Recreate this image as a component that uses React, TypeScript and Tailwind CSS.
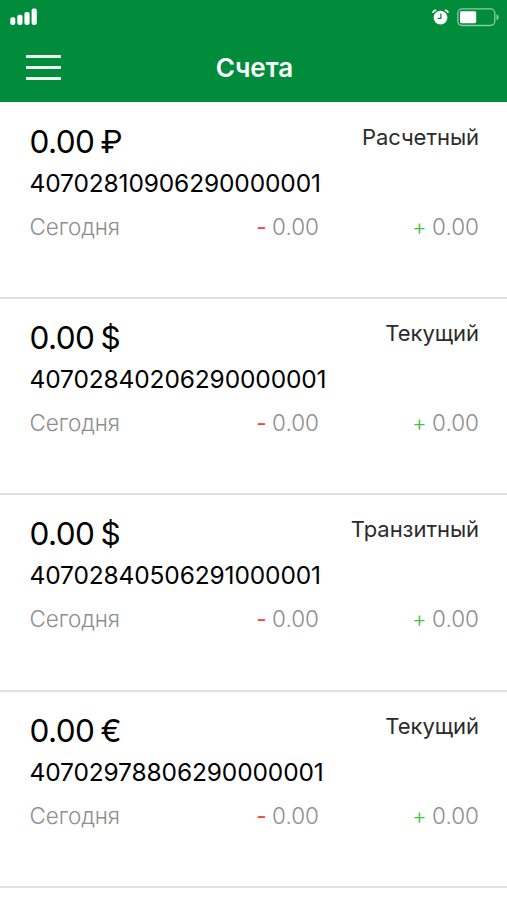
import React from 'react';

interface Account {
  balance: string;
  number: string;
  kind: string;
  debit: string;
  credit: string;
}

const accounts: Account[] = [
  { balance: '0.00 ₽', number: '40702810906290000001', kind: 'Расчетный', debit: '0.00', credit: '0.00' },
  { balance: '0.00 $', number: '40702840206290000001', kind: 'Текущий', debit: '0.00', credit: '0.00' },
  { balance: '0.00 $', number: '40702840506291000001', kind: 'Транзитный', debit: '0.00', credit: '0.00' },
  { balance: '0.00 €', number: '40702978806290000001', kind: 'Текущий', debit: '0.00', credit: '0.00' },
];

const SignalIcon = () => (
  <svg width="28" height="18" viewBox="0 0 28 18" fill="#fff">
    <rect x="0.3" y="9.3" width="5" height="7.6" rx="1.8" />
    <rect x="7.3" y="6.8" width="5.2" height="10.1" rx="1.8" />
    <rect x="14.4" y="3.9" width="5.2" height="13" rx="1.8" />
    <rect x="21.6" y="0.6" width="5.2" height="16.3" rx="1.8" />
  </svg>
);

const AlarmIcon = () => (
  <svg width="17" height="17" viewBox="0 0 17 17">
    <path d="M1 4 A2.6 2.6 0 0 1 4.2 1.5 M12.8 1.5 A2.6 2.6 0 0 1 16 4" fill="none" stroke="#fff" strokeWidth="1.6" />
    <circle cx="8.5" cy="8.6" r="6.9" fill="#fff" />
    <path d="M8.9 4.4 V9.4 H5.6" fill="none" stroke="#018c3b" strokeWidth="1.3" />
  </svg>
);

const BatteryIcon = () => (
  <svg width="43" height="19" viewBox="0 0 43 19">
    <rect x="0.8" y="0.9" width="37" height="16.6" rx="4.4" fill="none" stroke="#fff" strokeOpacity="0.55" strokeWidth="1.3" />
    <rect x="3" y="3.2" width="16.2" height="12" rx="1.4" fill="#fff" />
    <path d="M39.6 6.2 C42.3 7.2 42.3 11.2 39.6 12.2 Z" fill="#fff" fillOpacity="0.6" />
  </svg>
);

const Header = () => (
  <header className="h-[102px] bg-[#018c3b] text-white">
    <div className="flex h-[34px] items-center justify-between pl-2.5 pr-[7px]">
      <SignalIcon />
      <div className="flex items-center gap-2">
        <AlarmIcon />
        <BatteryIcon />
      </div>
    </div>
    <div className="grid h-[66px] grid-cols-[1fr_auto_1fr] items-center pl-[26px] pr-6">
      <button className="flex w-[35px] flex-col gap-[8px]" aria-label="Меню">
        <span className="h-[3px] bg-[#eef8f1]" />
        <span className="h-[3px] bg-[#eef8f1]" />
        <span className="h-[3px] bg-[#eef8f1]" />
      </button>
      <h1 className="pt-0.5 text-[26px] font-semibold leading-8">Счета</h1>
    </div>
  </header>
);

const AccountRow: React.FC<{ account: Account }> = ({ account }) => (
  <li className="h-[196.3px] border-b-2 border-[#e1e1e3] pl-[29.5px] pr-7 pt-[18px]">
    <div className="flex items-start justify-between">
      <p className="mt-px text-[31.5px] leading-10 tracking-[-0.6px] [word-spacing:-2px]">{account.balance}</p>
      <p className="mt-[2px] text-[22px] leading-7 tracking-[-0.05px] text-[#2b2b2b]">{account.kind}</p>
    </div>
    <p className="mt-[3px] text-[24.5px] leading-9 tracking-[-0.13px]">{account.number}</p>
    <div className="mt-[12px] grid grid-cols-[1fr_160px_160px] text-right text-[22.5px] font-light leading-7 text-[#8e8e8e]">
      <span className="text-left tracking-[-0.1px]">Сегодня</span>
      <span><span className="font-normal text-[#ee4444]">-</span><span className="ml-[5.5px]">{account.debit}</span></span>
      <span><span className="text-[#3fc43f]">+</span><span className="ml-[5.5px]">{account.credit}</span></span>
    </div>
  </li>
);

export default function App() {
  return (
    <div className="h-[900px] w-full overflow-hidden bg-white font-['Inter',sans-serif] text-black">
      <Header />
      <ul className="pt-[0.9px]">
        {accounts.map((account) => (
          <AccountRow key={account.number} account={account} />
        ))}
      </ul>
    </div>
  );
}
